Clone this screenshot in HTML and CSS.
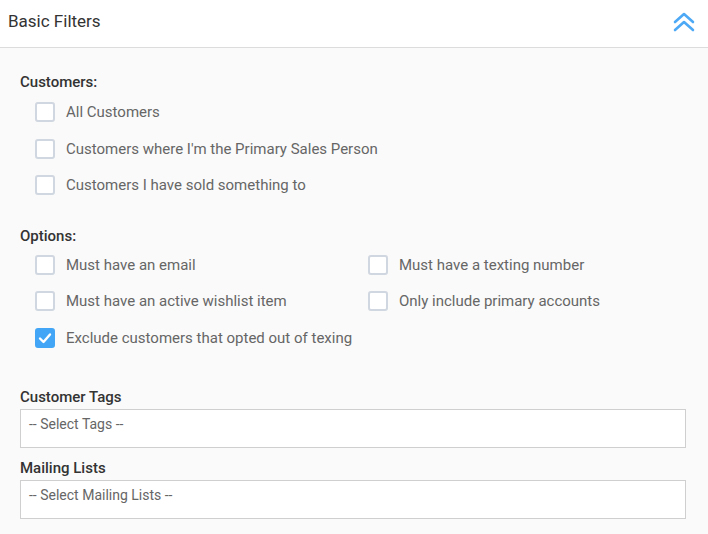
FILE: index.html
```html
<!DOCTYPE html>
<html>
<head>
<meta charset="utf-8">
<link rel="stylesheet" href="styles.css">
</head>
<body>
<div class="panel">
  <div class="header">
    <span class="title">Basic Filters</span>
    <svg class="chev" width="22" height="20" viewBox="0 0 22 20">
      <path d="M2 10 L11 2 L20 10 M2 18 L11 10 L20 18" fill="none" stroke="#4da9f5" stroke-width="2.6" stroke-linecap="round" stroke-linejoin="round"/>
    </svg>
  </div>
  <div class="body">
    <div class="group-label">Customers:</div>
    <div class="list">
      <label class="cb"><span class="box"></span>All Customers</label>
      <label class="cb"><span class="box"></span>Customers where I'm the Primary Sales Person</label>
      <label class="cb"><span class="box"></span>Customers I have sold something to</label>
    </div>
    <div class="group-label options-label">Options:</div>
    <div class="grid">
      <label class="cb"><span class="box"></span>Must have an email</label>
      <label class="cb"><span class="box"></span>Must have a texting number</label>
      <label class="cb"><span class="box"></span>Must have an active wishlist item</label>
      <label class="cb"><span class="box"></span>Only include primary accounts</label>
      <label class="cb"><span class="box checked"><svg width="14" height="12" viewBox="0 0 14 12"><path d="M2 6.5 L5.5 10 L12 2.5" fill="none" stroke="#fff" stroke-width="2.4" stroke-linecap="round" stroke-linejoin="round"/></svg></span>Exclude customers that opted out of texing</label>
    </div>
    <div class="field first">
      <div class="field-label">Customer Tags</div>
      <div class="select">-- Select Tags --</div>
    </div>
    <div class="field">
      <div class="field-label">Mailing Lists</div>
      <div class="select">-- Select Mailing Lists --</div>
    </div>
  </div>
</div>
</body>
</html>
```
FILE: styles.css
```css
html, body {
  margin: 0;
  padding: 0;
  background: #fafafa;
  font-family: Roboto, "Liberation Sans", sans-serif;
}
.panel {
  width: 708px;
  height: 534px;
  overflow: hidden;
}
.header {
  height: 48px;
  background: #fff;
  border-bottom: 1px solid #dcdcdc;
  display: flex;
  align-items: center;
  justify-content: space-between;
  padding: 0 13px 0 8px;
  box-sizing: border-box;
}
.title {
  font-size: 17px;
  color: #333;
  margin-top: -5px;
}
.chev {
  margin-top: -4px;
}
.body {
  padding: 25px 22px 0 20px;
}
.group-label {
  font-size: 15px;
  font-weight: 500;
  color: #333;
  line-height: 18px;
}
.options-label {
  margin-top: 23px;
}
.list {
  display: flex;
  flex-direction: column;
  padding-left: 15px;
  margin-top: 3px;
}
.cb {
  display: flex;
  align-items: center;
  height: 36.5px;
  font-size: 15px;
  color: #666;
}
.box {
  width: 20px;
  height: 20px;
  box-sizing: border-box;
  border: 2px solid #d0d7e0;
  border-radius: 3px;
  background: #fff;
  margin-right: 11px;
  display: flex;
  align-items: center;
  justify-content: center;
  flex: none;
}
.box.checked {
  background: #42a5f5;
  border-color: #42a5f5;
}
.grid {
  display: grid;
  grid-template-columns: 333px 1fr;
  padding-left: 15px;
  margin-top: 2px;
}
.field {
  margin-top: 11px;
}
.field.first {
  margin-top: 32px;
}
.field-label {
  font-size: 15px;
  font-weight: 500;
  color: #333;
  line-height: 18px;
  margin-bottom: 3px;
}
.select {
  height: 39px;
  box-sizing: border-box;
  border: 1px solid #cfcfcf;
  background: #fff;
  font-size: 14px;
  color: #666;
  padding: 6px 8px;
  line-height: 16px;
}
```
